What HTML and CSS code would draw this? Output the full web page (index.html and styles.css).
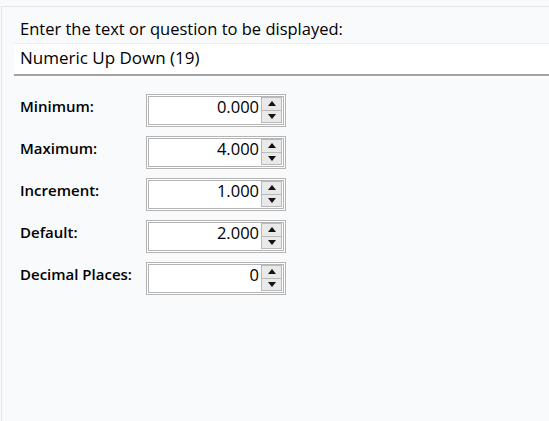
FILE: index.html
```html
<!DOCTYPE html>
<html>
<head>
<meta charset="utf-8">
<link rel="stylesheet" href="styles.css">
</head>
<body>
<div class="panel">
  <div class="prompt">Enter the text or question to be displayed:</div>
  <div class="text-input">Numeric Up Down (19)</div>
  <div class="form">
    <div class="row">
      <div class="label">Minimum:</div>
      <div class="spin"><span class="value">0.000</span><span class="btns"><span class="btn up"></span><span class="btn down"></span></span></div>
    </div>
    <div class="row">
      <div class="label">Maximum:</div>
      <div class="spin"><span class="value">4.000</span><span class="btns"><span class="btn up"></span><span class="btn down"></span></span></div>
    </div>
    <div class="row">
      <div class="label">Increment:</div>
      <div class="spin"><span class="value">1.000</span><span class="btns"><span class="btn up"></span><span class="btn down"></span></span></div>
    </div>
    <div class="row">
      <div class="label">Default:</div>
      <div class="spin"><span class="value">2.000</span><span class="btns"><span class="btn up"></span><span class="btn down"></span></span></div>
    </div>
    <div class="row">
      <div class="label">Decimal Places:</div>
      <div class="spin"><span class="value">0</span><span class="btns"><span class="btn up"></span><span class="btn down"></span></span></div>
    </div>
  </div>
</div>
</body>
</html>
```
FILE: styles.css
```css
html, body {
  margin: 0;
  padding: 0;
  background: #f8fafc;
  height: 100%;
  overflow: hidden;
}
body {
  font-family: "Open Sans", "Noto Sans", sans-serif;
  color: #000;
}
.panel {
  margin: 6px 0 0 1px;
  border-top: 1px solid #e1e6ee;
  border-left: 1px solid #e1e6ee;
  padding-left: 12px;
  height: 420px;
  box-sizing: border-box;
}
.prompt {
  margin-top: 12px;
  padding-left: 6px;
  font-size: 16.5px;
  line-height: 20px;
  height: 20px;
  margin-bottom: 4px;
  white-space: nowrap;
}
.text-input {
  background: #fff;
  border-top: 1px solid #eceef2;
  border-bottom: 2px solid #a3a3a3;
  height: 30px;
  padding-left: 6px;
  font-size: 17px;
  line-height: 28px;
  white-space: nowrap;
}
.form {
  margin-top: 18px;
  display: flex;
  flex-direction: column;
  gap: 9px;
}
.row {
  display: flex;
  align-items: flex-start;
}
.label {
  width: 126px;
  padding-left: 6px;
  font-size: 15px;
  font-weight: 600;
  line-height: 20px;
  padding-top: 2px;
  white-space: nowrap;
}
.spin {
  width: 140px;
  height: 33px;
  box-sizing: border-box;
  border: 3px double #b4b4b4;
  background: #fff;
  display: flex;
  align-items: stretch;
}
.value {
  flex: 1;
  text-align: right;
  font-size: 16.5px;
  line-height: 19px;
  padding-right: 2px;
}
.btns {
  width: 21px;
  display: flex;
  flex-direction: column;
  padding: 0 1px 1px 0;
}
.btn {
  flex: 1;
  background: #e9e9e9;
  border: 1px solid #b9b9b9;
  position: relative;
}
.btn + .btn {
  border-top: none;
}
.btn::after {
  content: "";
  position: absolute;
  left: 50%;
  top: 50%;
  width: 0;
  height: 0;
  margin-left: -4px;
  border-left: 4px solid transparent;
  border-right: 4px solid transparent;
}
.up::after {
  margin-top: -3px;
  border-bottom: 5px solid #111;
}
.down::after {
  margin-top: -2px;
  border-top: 5px solid #111;
}
```
